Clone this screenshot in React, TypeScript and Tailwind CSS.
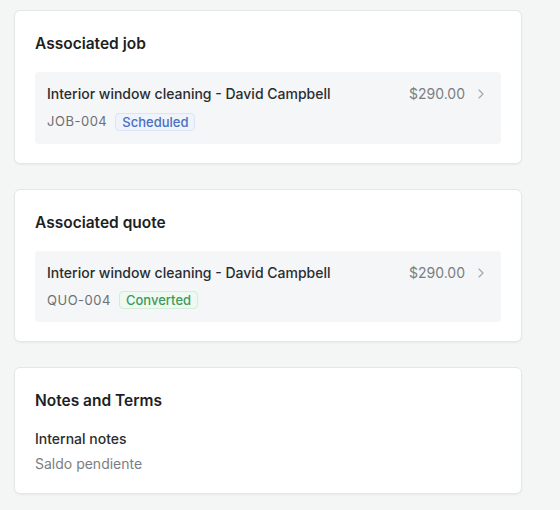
import { ChevronRight } from 'lucide-react';

type LinkedItem = {
  title: string;
  code: string;
  amount: string;
  status: string;
  tone: 'blue' | 'green';
};

const badgeTone = {
  blue: 'border-[#dbe5f7] bg-[#eef3fc] text-[#4a6fbf]',
  green: 'border-[#d3ecdb] bg-[#eef9f1] text-[#3e9a5b]',
};

function Card({ title, children }: { title: string; children: React.ReactNode }) {
  return (
    <section className="rounded-md border border-[#e4e6e8] bg-white px-5 pt-[21px] pb-[19px] shadow-[0_1px_2px_rgba(0,0,0,0.05)]">
      <h2 className="text-[15.5px] font-semibold leading-6 text-[#1c1f23]">{title}</h2>
      {children}
    </section>
  );
}

function LinkedRow({ item }: { item: LinkedItem }) {
  return (
    <div className="mt-4 flex items-start justify-between rounded-sm bg-[#f5f6f7] px-3 py-3">
      <div>
        <div className="text-[14px] font-medium leading-5 text-[#2a2d31]">{item.title}</div>
        <div className="mt-2 flex items-center gap-2">
          <span className="text-[13px] tracking-[0.04em] text-[#6b7075]">{item.code}</span>
          <span className={`rounded-sm border px-1.5 text-[13px] font-medium leading-4 ${badgeTone[item.tone]}`}>
            {item.status}
          </span>
        </div>
      </div>
      <div className="flex items-center gap-2 text-[14px] leading-5 text-[#7a7e83]">
        <span>{item.amount}</span>
        <ChevronRight className="h-4 w-4 text-[#a3a7ab]" strokeWidth={1.75} />
      </div>
    </div>
  );
}

export default function App() {
  const job: LinkedItem = {
    title: 'Interior window cleaning - David Campbell',
    code: 'JOB-004',
    amount: '$290.00',
    status: 'Scheduled',
    tone: 'blue',
  };
  const quote: LinkedItem = {
    title: 'Interior window cleaning - David Campbell',
    code: 'QUO-004',
    amount: '$290.00',
    status: 'Converted',
    tone: 'green',
  };

  return (
    <div className="min-h-[510px] bg-[#f4f5f5] pl-[14px] pr-[38px] pt-[10px] font-['Inter',sans-serif]">
      <div className="flex flex-col gap-[25px]">
        <Card title="Associated job">
          <LinkedRow item={job} />
        </Card>
        <Card title="Associated quote">
          <LinkedRow item={quote} />
        </Card>
        <Card title="Notes and Terms">
          <div className="mt-4 text-[14px] font-medium leading-5 text-[#2a2d31]">Internal notes</div>
          <div className="mt-[5px] text-[14px] leading-5 text-[#7a7e83]">Saldo pendiente</div>
        </Card>
      </div>
    </div>
  );
}
